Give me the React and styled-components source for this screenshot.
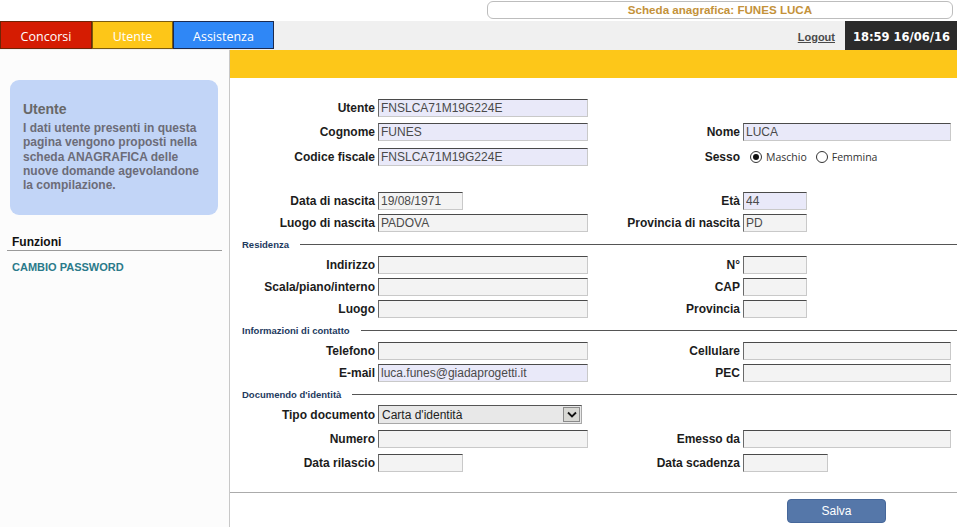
import React from 'react';
import styled, { createGlobalStyle } from 'styled-components';

const GlobalStyle = createGlobalStyle`
  html, body { margin: 0; padding: 0; background: #fff; }
  body { font-family: "Liberation Sans", Arial, sans-serif; }
`;

const Page = styled.div`
  width: 957px;
  height: 527px;
  display: flex;
  flex-direction: column;
  overflow: hidden;
`;

const TopBar = styled.div`
  height: 21px;
  display: flex;
  justify-content: flex-end;
  align-items: flex-start;
  padding-right: 4px;
`;

const TitleBox = styled.div`
  width: 466px;
  height: 18px;
  margin-top: 1px;
  box-sizing: border-box;
  border: 1px solid #bdbdbd;
  border-radius: 6px;
  text-align: center;
  font: bold 11.6px/16px "Liberation Sans", Arial, sans-serif;
  color: #c4923a;
`;

const NavBar = styled.div`
  height: 29px;
  background: #f0f0f0;
  display: flex;
  align-items: stretch;
`;

const Tab = styled.div`
  width: ${p => p.$w}px;
  box-sizing: border-box;
  background: ${p => p.$bg};
  border: 1px solid ${p => p.$border};
  color: #fff;
  font: 12.5px/29px "Open Sans", "Noto Sans", sans-serif;
  text-align: center;
  height: 28px;
`;

const Spacer = styled.div`
  flex: 1;
`;

const Logout = styled.a`
  align-self: center;
  margin: 2px 10px 0 0;
  font: bold 11px "Liberation Sans", Arial, sans-serif;
  color: #4a4a4a;
  text-decoration: underline;
`;

const Clock = styled.div`
  width: 112px;
  box-sizing: border-box;
  padding-left: 8px;
  background: #2b2b2b;
  color: #fff;
  font: bold 11.5px/32px "DejaVu Sans", Verdana, sans-serif;
  white-space: nowrap;
`;

const Body = styled.div`
  flex: 1;
  display: flex;
`;

const Sidebar = styled.aside`
  width: 230px;
  box-sizing: border-box;
  border-right: 1px solid #c8c8c8;
  background: #fcfcfc;
  padding: 30px 11px 0 10px;
`;

const InfoBox = styled.div`
  width: 208px;
  height: 135px;
  box-sizing: border-box;
  background: #c2d5f7;
  border-radius: 9px;
  padding: 18px 10px 0 13px;
  color: #6c6c78;
`;

const InfoTitle = styled.div`
  font: bold 14px/23px "Liberation Sans", Arial, sans-serif;
  color: #686868;
`;

const InfoText = styled.div`
  font: bold 12px/14.3px "Liberation Sans", Arial, sans-serif;
`;

const FuncHeading = styled.div`
  margin: 20px -4px 0 -3px;
  padding: 0 0 0 5px;
  border-bottom: 1px solid #9a9a9a;
  font: bold 12px/15px "Liberation Sans", Arial, sans-serif;
  color: #111;
`;

const FuncLink = styled.a`
  display: block;
  margin-top: 10px;
  padding-left: 2px;
  font: bold 11px "Liberation Sans", Arial, sans-serif;
  color: #2a7a8a;
  text-decoration: none;
`;

const Main = styled.main`
  flex: 1;
  display: flex;
  flex-direction: column;
`;

const YellowBar = styled.div`
  height: 28px;
  background: #fdc719;
`;

const Form = styled.form`
  padding-top: 20px;
  display: flex;
  flex-direction: column;
`;

const Row = styled.div`
  display: grid;
  grid-template-columns: 148px 217px 148px 1fr;
  align-items: start;
  height: ${p => p.$h || 22}px;
  margin-top: ${p => p.$mt || 0}px;
`;

const Label = styled.label`
  text-align: right;
  padding-right: 3px;
  font: bold 12px/21px "Liberation Sans", Arial, sans-serif;
  color: #1c1c1c;
  white-space: nowrap;
`;

const Field = styled.input`
  width: ${p => p.$w}px;
  height: 18px;
  box-sizing: border-box;
  margin: 0;
  padding: 0 2px;
  border: 1px solid #c9c9c9;
  border-top-color: #4a4a4a;
  border-left-color: #6a6a6a;
  background: ${p => (p.$locked ? '#e9e9f9' : '#f3f3f3')};
  font: 12px "Liberation Sans", Arial, sans-serif;
  color: #4a4a4a;
  outline: none;
`;

const SelectBox = styled.div`
  width: 204px;
  height: 19px;
  box-sizing: border-box;
  border: 1px solid #a8a8a8;
  border-top-color: #555;
  border-left-color: #666;
  background: #e8e8e8;
  display: flex;
  align-items: center;
  justify-content: space-between;
  padding: 0 1px 0 3px;
  font: 12px "Liberation Sans", Arial, sans-serif;
  color: #222;
`;

const SelectArrow = styled.span`
  width: 17px;
  height: 15px;
  box-sizing: border-box;
  border: 1px solid #8a8a8a;
  background: #d8d8d4;
  display: flex;
  align-items: center;
  justify-content: center;
`;

const Radios = styled.div`
  display: flex;
  align-items: center;
  height: 20px;
  padding-left: 7px;
  gap: 4px;
  font: 10.5px "Open Sans", "Noto Sans", sans-serif;
  color: #333;
`;

const RadioDot = styled.span`
  width: 12px;
  height: 12px;
  box-sizing: border-box;
  border: 1px solid #333;
  border-radius: 50%;
  display: flex;
  align-items: center;
  justify-content: center;
  &::after {
    content: '';
    width: 6px;
    height: 6px;
    border-radius: 50%;
    background: ${p => (p.$on ? '#111' : 'transparent')};
  }
`;

const RadioText = styled.span`
  margin-right: 5px;
`;

const SectionHeader = styled.div`
  display: flex;
  align-items: center;
  height: 16px;
  margin: 1px 0 3px;
  padding-left: 12px;
  font: bold 9.5px "Liberation Sans", Arial, sans-serif;
  color: #1d3a5e;
  &::after {
    content: '';
    flex: 1;
    height: 1px;
    margin-left: 11px;
    background: #555;
  }
`;

const Divider = styled.hr`
  margin: 15px 0 0;
  border: none;
  border-top: 1px solid #ababab;
`;

const Footer = styled.div`
  display: flex;
  justify-content: flex-end;
  padding: 6px 71px 0 0;
`;

const SaveButton = styled.button`
  width: 99px;
  height: 24px;
  border: 1px solid #46679a;
  border-radius: 4px;
  background: #5577a9;
  color: #fff;
  font: 12px "Liberation Sans", Arial, sans-serif;
  cursor: pointer;
`;

const Chevron = () => (
  <svg width="10" height="7" viewBox="0 0 10 7">
    <path d="M1 1.5 L5 5.5 L9 1.5" fill="none" stroke="#111" strokeWidth="1.8" />
  </svg>
);

const Input = ({ w, value = '', locked }) => (
  <Field $w={w} $locked={locked} defaultValue={value} readOnly={locked} />
);

const App = () => (
  <>
    <GlobalStyle />
    <Page>
      <TopBar>
        <TitleBox>Scheda anagrafica: FUNES LUCA</TitleBox>
      </TopBar>
      <NavBar>
        <Tab $w={92} $bg="#d51c02" $border="#6e2406">Concorsi</Tab>
        <Tab $w={81} $bg="#fdc618" $border="#7a5a10">Utente</Tab>
        <Tab $w={101} $bg="#2f87f6" $border="#1c2a4e">Assistenza</Tab>
        <Spacer />
        <Logout>Logout</Logout>
        <Clock>18:59 16/06/16</Clock>
      </NavBar>
      <Body>
        <Sidebar>
          <InfoBox>
            <InfoTitle>Utente</InfoTitle>
            <InfoText>
              I dati utente presenti in questa pagina vengono proposti nella scheda ANAGRAFICA delle
              nuove domande agevolandone la compilazione.
            </InfoText>
          </InfoBox>
          <FuncHeading>Funzioni</FuncHeading>
          <FuncLink>CAMBIO PASSWORD</FuncLink>
        </Sidebar>
        <Main>
          <YellowBar />
          <Form>
            <Row $h={24}>
              <Label>Utente</Label>
              <div><Input w={210} value="FNSLCA71M19G224E" locked /></div>
            </Row>
            <Row $h={24}>
              <Label>Cognome</Label>
              <div><Input w={210} value="FUNES" locked /></div>
              <Label>Nome</Label>
              <div><Input w={208} value="LUCA" locked /></div>
            </Row>
            <Row $h={24} $mt={1}>
              <Label>Codice fiscale</Label>
              <div><Input w={210} value="FNSLCA71M19G224E" locked /></div>
              <Label>Sesso</Label>
              <Radios>
                <RadioDot $on />
                <RadioText>Maschio</RadioText>
                <RadioDot />
                <RadioText>Femmina</RadioText>
              </Radios>
            </Row>
            <Row $mt={20}>
              <Label>Data di nascita</Label>
              <div><Input w={85} value="19/08/1971" /></div>
              <Label>Età</Label>
              <div><Input w={64} value="44" locked /></div>
            </Row>
            <Row>
              <Label>Luogo di nascita</Label>
              <div><Input w={210} value="PADOVA" /></div>
              <Label>Provincia di nascita</Label>
              <div><Input w={64} value="PD" /></div>
            </Row>

            <SectionHeader>Residenza</SectionHeader>
            <Row>
              <Label>Indirizzo</Label>
              <div><Input w={210} /></div>
              <Label>N°</Label>
              <div><Input w={64} /></div>
            </Row>
            <Row>
              <Label>Scala/piano/interno</Label>
              <div><Input w={210} /></div>
              <Label>CAP</Label>
              <div><Input w={64} /></div>
            </Row>
            <Row>
              <Label>Luogo</Label>
              <div><Input w={210} /></div>
              <Label>Provincia</Label>
              <div><Input w={64} /></div>
            </Row>

            <SectionHeader>Informazioni di contatto</SectionHeader>
            <Row>
              <Label>Telefono</Label>
              <div><Input w={210} /></div>
              <Label>Cellulare</Label>
              <div><Input w={208} /></div>
            </Row>
            <Row>
              <Label>E-mail</Label>
              <div><Input w={210} value="luca.funes@giadaprogetti.it" locked /></div>
              <Label>PEC</Label>
              <div><Input w={208} /></div>
            </Row>

            <SectionHeader>Documendo d'identità</SectionHeader>
            <Row $h={24}>
              <Label>Tipo documento</Label>
              <div>
                <SelectBox>
                  <span>Carta d'identità</span>
                  <SelectArrow><Chevron /></SelectArrow>
                </SelectBox>
              </div>
            </Row>
            <Row $h={24}>
              <Label>Numero</Label>
              <div><Input w={210} /></div>
              <Label>Emesso da</Label>
              <div><Input w={208} /></div>
            </Row>
            <Row $h={24}>
              <Label>Data rilascio</Label>
              <div><Input w={85} /></div>
              <Label>Data scadenza</Label>
              <div><Input w={85} /></div>
            </Row>
          </Form>
          <Divider />
          <Footer>
            <SaveButton type="button">Salva</SaveButton>
          </Footer>
        </Main>
      </Body>
    </Page>
  </>
);

export default App;
